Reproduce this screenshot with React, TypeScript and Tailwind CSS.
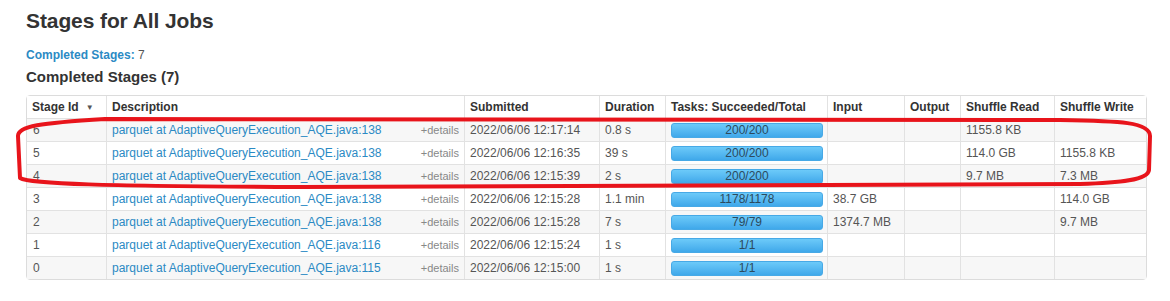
const rows = [
  { id: 6, desc: 'parquet at AdaptiveQueryExecution_AQE.java:138', submitted: '2022/06/06 12:17:14', duration: '0.8 s', tasks: '200/200', input: '', output: '', shuffleRead: '1155.8 KB', shuffleWrite: '' },
  { id: 5, desc: 'parquet at AdaptiveQueryExecution_AQE.java:138', submitted: '2022/06/06 12:16:35', duration: '39 s', tasks: '200/200', input: '', output: '', shuffleRead: '114.0 GB', shuffleWrite: '1155.8 KB' },
  { id: 4, desc: 'parquet at AdaptiveQueryExecution_AQE.java:138', submitted: '2022/06/06 12:15:39', duration: '2 s', tasks: '200/200', input: '', output: '', shuffleRead: '9.7 MB', shuffleWrite: '7.3 MB' },
  { id: 3, desc: 'parquet at AdaptiveQueryExecution_AQE.java:138', submitted: '2022/06/06 12:15:28', duration: '1.1 min', tasks: '1178/1178', input: '38.7 GB', output: '', shuffleRead: '', shuffleWrite: '114.0 GB' },
  { id: 2, desc: 'parquet at AdaptiveQueryExecution_AQE.java:138', submitted: '2022/06/06 12:15:28', duration: '7 s', tasks: '79/79', input: '1374.7 MB', output: '', shuffleRead: '', shuffleWrite: '9.7 MB' },
  { id: 1, desc: 'parquet at AdaptiveQueryExecution_AQE.java:116', submitted: '2022/06/06 12:15:24', duration: '1 s', tasks: '1/1', input: '', output: '', shuffleRead: '', shuffleWrite: '' },
  { id: 0, desc: 'parquet at AdaptiveQueryExecution_AQE.java:115', submitted: '2022/06/06 12:15:00', duration: '1 s', tasks: '1/1', input: '', output: '', shuffleRead: '', shuffleWrite: '' },
];

const headers = [
  { label: 'Stage Id', width: 'w-[79px]' },
  { label: 'Description', width: 'w-[358px]' },
  { label: 'Submitted', width: 'w-[135px]' },
  { label: 'Duration', width: 'w-[66px]' },
  { label: 'Tasks: Succeeded/Total', width: 'w-[162px]' },
  { label: 'Input', width: 'w-[77px]' },
  { label: 'Output', width: 'w-[56px]' },
  { label: 'Shuffle Read', width: 'w-[94px]' },
  { label: 'Shuffle Write', width: 'w-[92px]' },
];

const cell = 'border-l border-t border-[#e2e2e2] first:border-l-0 px-[5px] whitespace-nowrap';

const App = () => {
  return (
    <div className="relative w-[1170px] h-[301px] bg-white text-[#333] font-['Liberation_Sans',Arial,sans-serif] pl-[26px] pt-[8px]">
      <h3 className="text-[21px] leading-[25px] font-bold text-[#333] tracking-[-0.1px]">Stages for All Jobs</h3>
      <div className="mt-[14px] text-[12px] leading-[16px]">
        <a className="font-bold text-[#2b8ac4]">Completed Stages:</a>
        <span className="text-[#555]"> 7</span>
      </div>
      <h4 className="mt-[4px] text-[15px] leading-[20px] font-bold text-[#333]">Completed Stages (7)</h4>

      <table className="mt-[8px] w-[1121px] table-fixed border-separate border-spacing-0 border border-[#dcdcdc] rounded-[4px] text-[12px]">
        <thead>
          <tr className="h-[22px] bg-white">
            {headers.map((h, i) => (
              <th
                key={h.label}
                className={`${h.width} border-l border-[#e2e2e2] first:border-l-0 px-[5px] text-left font-bold text-[#333] whitespace-nowrap`}
              >
                {h.label}
                {i === 0 && <span className="ml-[7px] text-[8px] align-middle text-[#555]">▼</span>}
              </th>
            ))}
          </tr>
        </thead>
        <tbody>
          {rows.map((r, i) => (
            <tr key={r.id} className={`h-[23px] ${i % 2 === 0 ? 'bg-[#f7f7f7]' : 'bg-white'}`}>
              <td className={`${cell} text-[#555] pl-[6px]`}>{r.id}</td>
              <td className={cell}>
                <div className="flex items-center justify-between">
                  <a className="text-[#2b8ac4]">{r.desc}</a>
                  <span className="text-[11px] text-[#888]">+details</span>
                </div>
              </td>
              <td className={`${cell} text-[#555]`}>{r.submitted}</td>
              <td className={`${cell} text-[#555]`}>{r.duration}</td>
              <td className={`${cell} pr-[4px]`}>
                <div className="h-[15px] rounded-[3px] border border-[#47a9e6] bg-gradient-to-b from-[#6ccaf9] to-[#3fa8ea] flex items-center justify-center text-[12px] leading-none text-[#2c4a5e]">
                  {r.tasks}
                </div>
              </td>
              <td className={`${cell} text-[#555]`}>{r.input}</td>
              <td className={`${cell} text-[#555]`}>{r.output}</td>
              <td className={`${cell} text-[#555]`}>{r.shuffleRead}</td>
              <td className={`${cell} text-[#555]`}>{r.shuffleWrite}</td>
            </tr>
          ))}
        </tbody>
      </table>

      {/* hand-drawn highlight around the last three stages */}
      <svg className="absolute left-0 top-0 pointer-events-none" width="1170" height="301">
        <path
          d="M105 119 L1060 120 C1120 121 1150 122 1150 136 L1149 170 C1148 180 1120 183 1080 184 L300 187 C100 186 30 184 20 178 L18 136 C18 126 40 123 105 119 Z"
          fill="none"
          stroke="#e8141b"
          strokeWidth="4"
          strokeLinejoin="round"
        />
      </svg>
    </div>
  );
};

export default App;
